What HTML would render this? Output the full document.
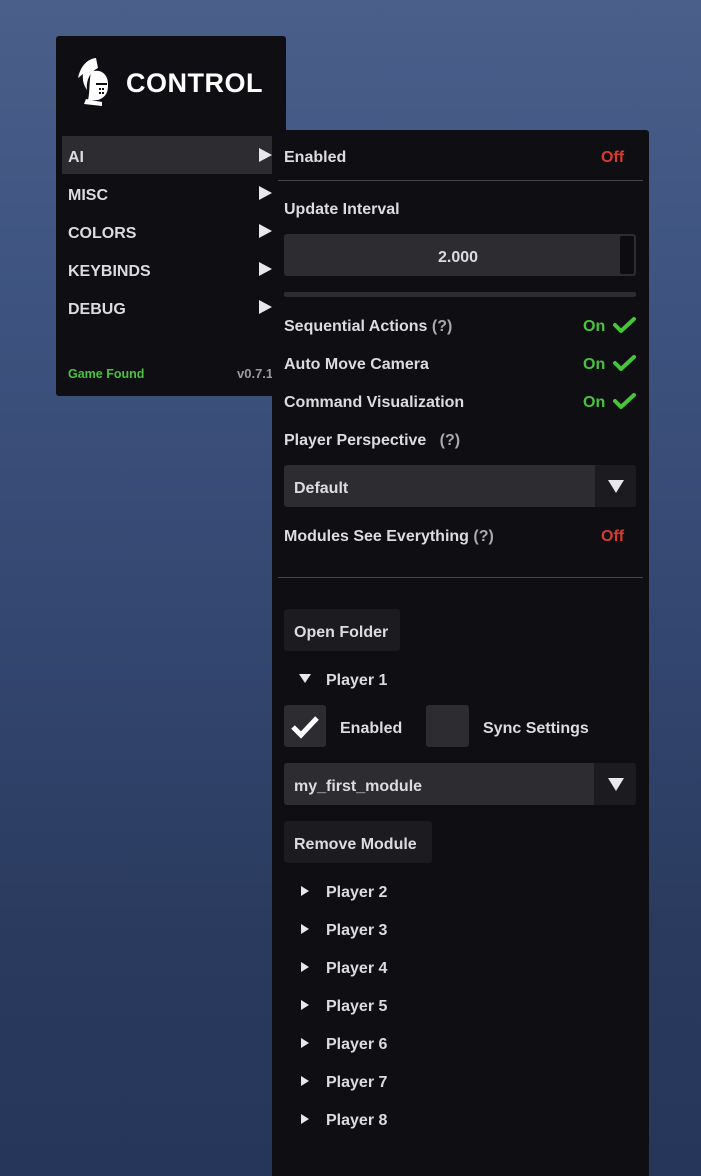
<!DOCTYPE html>
<html><head><meta charset="utf-8"><style>
*{margin:0;padding:0;box-sizing:border-box}
body{width:701px;height:1176px;overflow:hidden;position:relative;
background:linear-gradient(180deg,#4a5f8a 0%,#3e5380 25%,#33466f 55%,#2a3a5e 80%,#26355a 100%);
font-family:"Liberation Sans",sans-serif;font-weight:bold;font-size:16px;color:#dcdcde}
.p{position:absolute;background:#0f0e13}
.t{position:absolute;line-height:20px;white-space:nowrap;transform:translateY(2px)}
.arr{position:absolute;width:0;height:0;border-top:7px solid transparent;border-bottom:7px solid transparent;border-left:13px solid #e8e8ea}
.sarr{position:absolute;width:0;height:0;border-top:5px solid transparent;border-bottom:5px solid transparent;border-left:8px solid #e8e8ea}
.darr{position:absolute;width:0;height:0;border-left:8px solid transparent;border-right:8px solid transparent;border-top:13px solid #e8e8ea}
.box{position:absolute;background:#2d2c31;border-radius:3px}
.btn{position:absolute;background:#1c1b20;border-radius:3px}
.red{color:#d83a32}.grn{color:#46c53a}
.hr{position:absolute;height:1px;background:#45444a}
</style></head><body>
<div class="p" style="left:56px;top:36px;width:230px;height:360px;border-radius:3px"></div>
<svg style="position:absolute;left:74px;top:56px" width="42" height="52" viewBox="0 0 42 52">
<path d="M22 2 C12 3 6 12 4 22 L9 18 C8 26 11 31 13 34 C12 24 16 16 24 12 Z" fill="#fff"/>
<path d="M17 16 C26 12 35 18 34 30 C34 38 30 42 24 44 L14 44 C16 36 15 26 17 16 Z" fill="#fff"/>
<path d="M12 43 L28 46 L28 50 L10 48 Z" fill="#fff"/>
<rect x="22" y="27" width="11" height="2" fill="#0f0e13"/>
<rect x="25" y="32" width="2" height="2" fill="#0f0e13"/><rect x="28" y="32" width="2" height="2" fill="#0f0e13"/>
<rect x="25" y="36" width="2" height="2" fill="#0f0e13"/><rect x="28" y="36" width="2" height="2" fill="#0f0e13"/>
</svg>
<div class="t" style="left:126px;top:68px;font-size:27px;line-height:30px;color:#fff;letter-spacing:0.5px;transform:none">CONTROL</div>
<div class="box" style="left:62px;top:136px;width:210px;height:38px;border-radius:0"></div>
<div class="t" style="left:68px;top:146px">AI</div><div class="arr" style="left:259px;top:148px"></div>
<div class="t" style="left:68px;top:184px">MISC</div><div class="arr" style="left:259px;top:186px"></div>
<div class="t" style="left:68px;top:222px">COLORS</div><div class="arr" style="left:259px;top:224px"></div>
<div class="t" style="left:68px;top:260px">KEYBINDS</div><div class="arr" style="left:259px;top:262px"></div>
<div class="t" style="left:68px;top:298px">DEBUG</div><div class="arr" style="left:259px;top:300px"></div>
<div class="t grn" style="left:68px;top:362px;font-size:12.5px">Game Found</div>
<div class="t" style="left:237px;top:362px;font-size:13px;color:#9a999e">v0.7.1</div>

<div class="p" style="left:272px;top:130px;width:377px;height:1046px;border-radius:3px 3px 0 0"></div>
<div class="t" style="left:284px;top:146px">Enabled</div><div class="t red" style="left:601px;top:146px">Off</div>
<div class="hr" style="left:278px;top:180px;width:365px"></div>
<div class="t" style="left:284px;top:198px">Update Interval</div>
<div class="box" style="left:284px;top:234px;width:352px;height:42px"></div>
<div class="t" style="left:438px;top:246px">2.000</div>
<div style="position:absolute;left:620px;top:236px;width:14px;height:38px;background:#0d0c0e;border-radius:2px"></div>
<div class="box" style="left:284px;top:292px;width:352px;height:5px;border-radius:2px"></div>
<div class="t" style="left:284px;top:315px">Sequential Actions <span style="color:#a8a7ac">(?)</span></div>
<div class="t" style="left:284px;top:353px">Auto Move Camera</div>
<div class="t" style="left:284px;top:391px">Command Visualization</div>
<div class="t grn" style="left:583px;top:315px">On</div>
<div class="t grn" style="left:583px;top:353px">On</div>
<div class="t grn" style="left:583px;top:391px">On</div>
<svg style="position:absolute;left:612px;top:314px" width="26" height="100"><g fill="none" stroke="#46c53a" stroke-width="4" stroke-linecap="round" stroke-linejoin="round"><path d="M3 11 L9 17 L22 5"/><path d="M3 49 L9 55 L22 43"/><path d="M3 87 L9 93 L22 81"/></g></svg>
<div class="t" style="left:284px;top:429px">Player Perspective &nbsp; <span style="color:#a8a7ac">(?)</span></div>
<div class="box" style="left:284px;top:465px;width:352px;height:42px"></div>
<div style="position:absolute;left:595px;top:465px;width:41px;height:42px;background:#1c1b20;border-radius:0 3px 3px 0"></div>
<div class="darr" style="left:608px;top:480px"></div>
<div class="t" style="left:294px;top:477px">Default</div>
<div class="t" style="left:284px;top:525px">Modules See Everything <span style="color:#a8a7ac">(?)</span></div>
<div class="t red" style="left:601px;top:525px">Off</div>
<div class="hr" style="left:278px;top:577px;width:365px"></div>
<div class="btn" style="left:284px;top:609px;width:116px;height:42px"></div>
<div class="t" style="left:294px;top:621px">Open Folder</div>
<div class="darr" style="left:299px;top:674px;border-left-width:6px;border-right-width:6px;border-top-width:9px"></div>
<div class="t" style="left:326px;top:669px">Player 1</div>
<div class="box" style="left:284px;top:705px;width:42px;height:42px"></div>
<svg style="position:absolute;left:288px;top:712px" width="34" height="30"><path d="M5 15 L13 23 L29 6" fill="none" stroke="#fff" stroke-width="5"/></svg>
<div class="t" style="left:340px;top:717px">Enabled</div>
<div class="box" style="left:426px;top:705px;width:43px;height:42px"></div>
<div class="t" style="left:483px;top:717px">Sync Settings</div>
<div class="box" style="left:284px;top:763px;width:352px;height:42px"></div>
<div style="position:absolute;left:594px;top:763px;width:42px;height:42px;background:#1c1b20;border-radius:0 3px 3px 0"></div>
<div class="darr" style="left:608px;top:778px"></div>
<div class="t" style="left:294px;top:775px">my_first_module</div>
<div class="btn" style="left:284px;top:821px;width:148px;height:42px"></div>
<div class="t" style="left:294px;top:833px">Remove Module</div>
<div class="sarr" style="left:301px;top:886px"></div><div class="t" style="left:326px;top:881px">Player 2</div>
<div class="sarr" style="left:301px;top:924px"></div><div class="t" style="left:326px;top:919px">Player 3</div>
<div class="sarr" style="left:301px;top:962px"></div><div class="t" style="left:326px;top:957px">Player 4</div>
<div class="sarr" style="left:301px;top:1000px"></div><div class="t" style="left:326px;top:995px">Player 5</div>
<div class="sarr" style="left:301px;top:1038px"></div><div class="t" style="left:326px;top:1033px">Player 6</div>
<div class="sarr" style="left:301px;top:1076px"></div><div class="t" style="left:326px;top:1071px">Player 7</div>
<div class="sarr" style="left:301px;top:1114px"></div><div class="t" style="left:326px;top:1109px">Player 8</div>
</body></html>
